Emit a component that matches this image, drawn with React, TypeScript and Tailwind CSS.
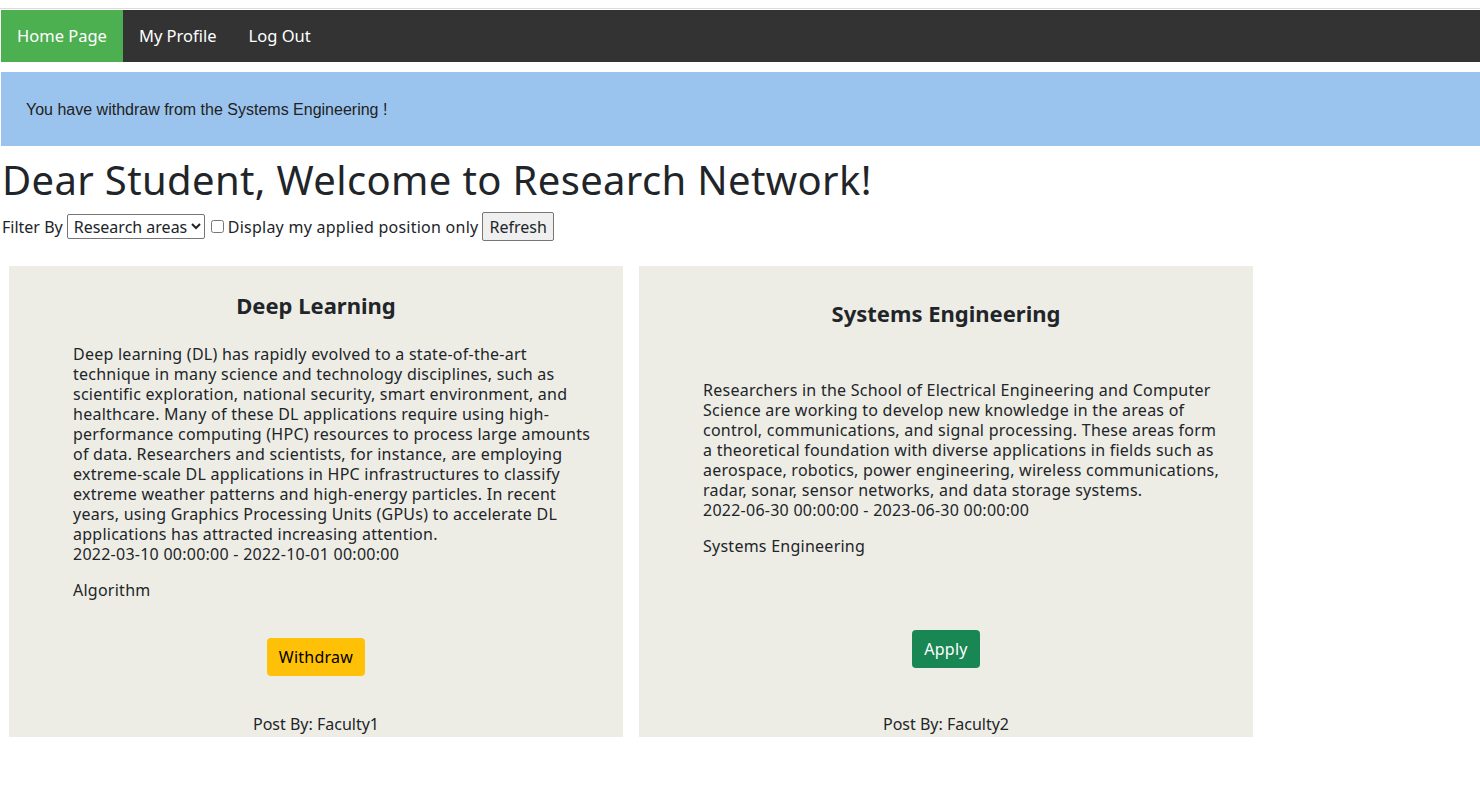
import React from 'react'

interface Position {
  title: string
  description: string
  period: string
  area: string
  faculty: string
  applied: boolean
}

const positions: Position[] = [
  {
    title: 'Deep Learning',
    description:
      'Deep learning (DL) has rapidly evolved to a state-of-the-art technique in many science and technology disciplines, such as scientific exploration, national security, smart environment, and healthcare. Many of these DL applications require using high-performance computing (HPC) resources to process large amounts of data. Researchers and scientists, for instance, are employing extreme-scale DL applications in HPC infrastructures to classify extreme weather patterns and high-energy particles. In recent years, using Graphics Processing Units (GPUs) to accelerate DL applications has attracted increasing attention.',
    period: '2022-03-10 00:00:00 - 2022-10-01 00:00:00',
    area: 'Algorithm',
    faculty: 'Faculty1',
    applied: true,
  },
  {
    title: 'Systems Engineering',
    description:
      'Researchers in the School of Electrical Engineering and Computer Science are working to develop new knowledge in the areas of control, communications, and signal processing. These areas form a theoretical foundation with diverse applications in fields such as aerospace, robotics, power engineering, wireless communications, radar, sonar, sensor networks, and data storage systems.',
    period: '2022-06-30 00:00:00 - 2023-06-30 00:00:00',
    area: 'Systems Engineering',
    faculty: 'Faculty2',
    applied: false,
  },
]

function PositionCard({ position }: { position: Position }) {
  return (
    <div className="bg-[#eeede5] flex flex-col text-[#212529]">
      <div className="flex-[1_1_25px]" />
      <h3 className="text-center text-[22px] font-bold leading-[29px] tracking-normal">{position.title}</h3>
      <div className="flex-[3.5_1_24px]" />
      <div className="pl-16 pr-[28px] text-[16px] leading-5">
        <p>{position.description}</p>
        <p>{position.period}</p>
        <p className="mt-4">{position.area}</p>
      </div>
      <div className="flex-[4.5_1_38px]" />
      <div className="flex justify-center">
        {position.applied ? (
          <button className="bg-[#ffc107] text-[#000] rounded-[4px] h-[38px] px-3 text-[16px]">Withdraw</button>
        ) : (
          <button className="bg-[#198754] text-white rounded-[4px] h-[38px] px-3 text-[16px]">Apply</button>
        )}
      </div>
      <div className="flex-[1_1_36px]" />
      <p className="text-center text-[16px] leading-6 mb-px tracking-normal">Post By: {position.faculty}</p>
    </div>
  )
}

export default function App() {
  return (
    <div
      className="min-h-[803px] bg-white text-[#212529] tracking-[0.25px]"
      style={{ fontFamily: '"Noto Sans", sans-serif' }}
    >
      <div className="h-2" />
      <div className="h-px bg-[#dcdcdc]" />
      <div className="h-px" />
      <nav className="ml-px flex h-[52px] bg-[#333333] text-[16.5px] tracking-normal text-white">
        <a className="flex items-center bg-[#4caf50] px-4">Home Page</a>
        <a className="flex items-center px-4">My Profile</a>
        <a className="flex items-center px-4">Log Out</a>
      </nav>
      <div
        className="ml-px mt-[10px] flex h-[74px] items-center bg-[#9ac4ee] px-[25px] pt-px text-[16px] tracking-normal text-[#222]"
        style={{ fontFamily: '"Liberation Sans", sans-serif' }}
      >
        You have withdraw from the Systems Engineering !
      </div>
      <h1 className="mt-[10px] pl-[2px] text-[40px] leading-[48px] tracking-[0.35px]">
        Dear Student, Welcome to Research Network!
      </h1>
      <div className="mt-[8px] flex items-center gap-[4px] pl-[2px] text-[16px]">
        <span className="tracking-normal">Filter By</span>
        <select className="h-[25px] rounded-[2px] border border-[#767676] bg-white pl-[2px] text-[16px] tracking-normal">
          <option>Research areas</option>
        </select>
        <input type="checkbox" className="ml-[2px] h-[13px] w-[13px]" />
        <span>Display my applied position only</span>
        <button className="h-[29px] rounded-[2px] border border-[#767676] bg-[#efefef] px-[6px] text-[16px] tracking-normal">
          Refresh
        </button>
      </div>
      <div className="mt-[25px] grid grid-cols-[614px_614px] gap-4 pl-[9px]">
        {positions.map((p) => (
          <PositionCard key={p.title} position={p} />
        ))}
      </div>
    </div>
  )
}
